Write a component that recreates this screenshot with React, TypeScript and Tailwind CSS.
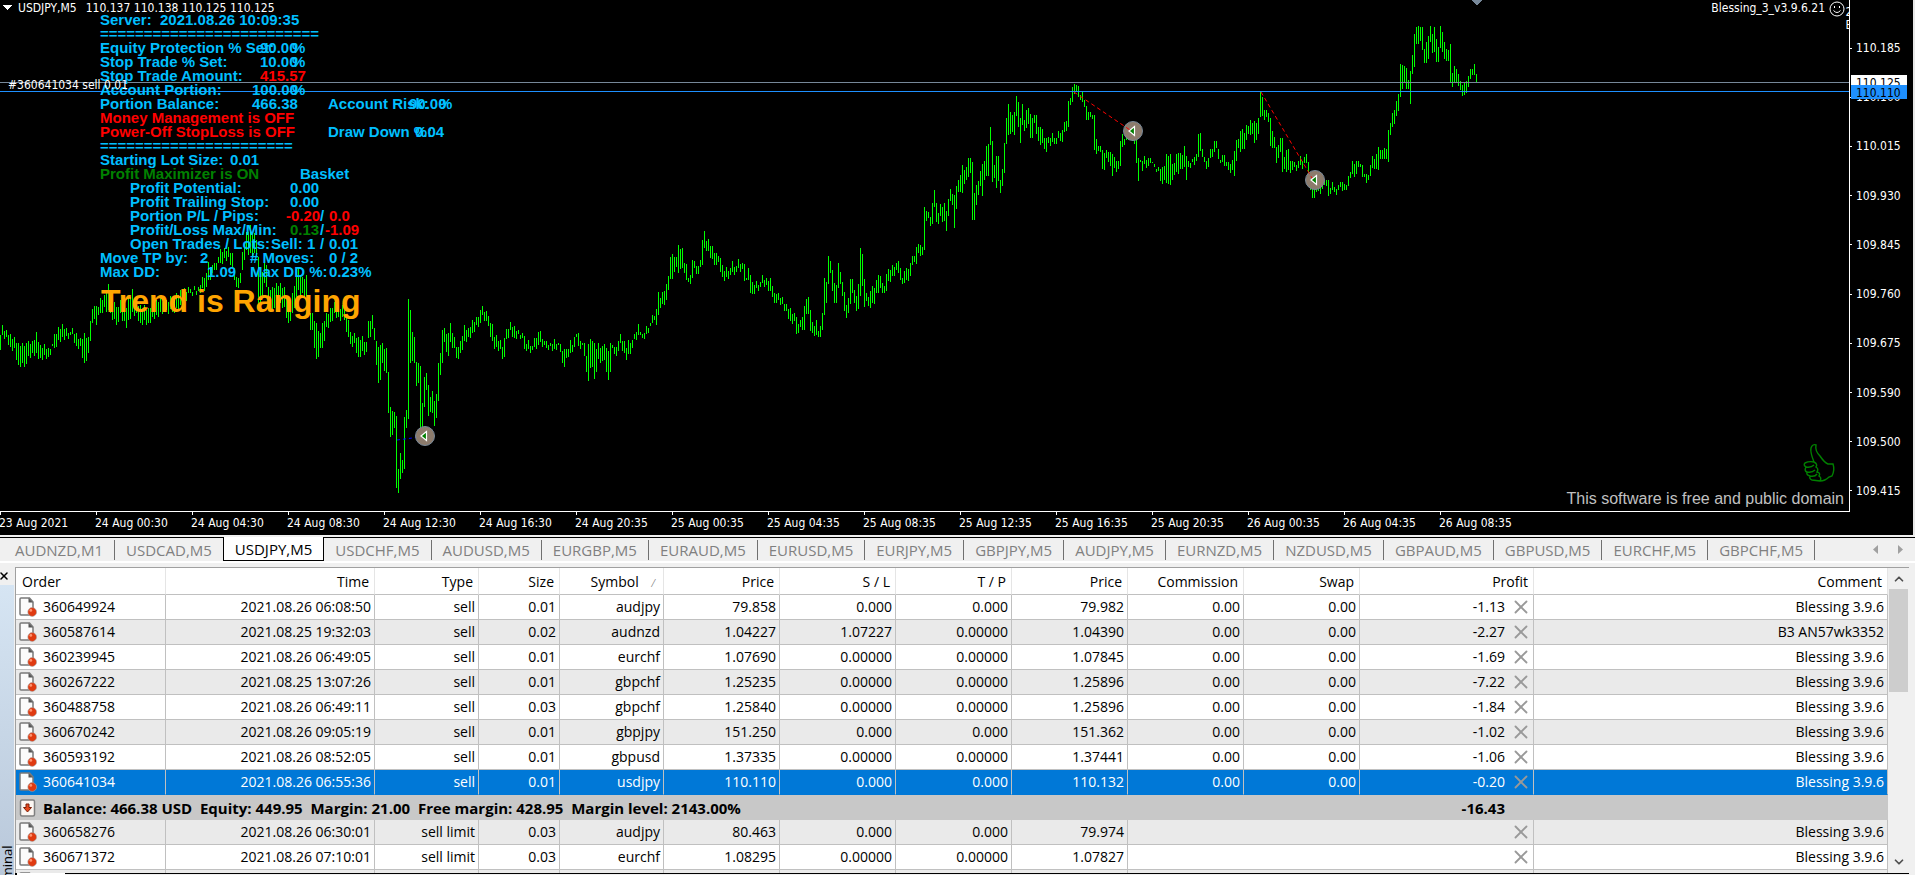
import { ChevronDown, ChevronUp, X } from 'lucide-react'

type Cell = { x: string; text: string; color?: string }

const RED = 'text-[#ff0000]'
const GREEN = 'text-[#008000]'

// x, high, low of each bar, one bar every two pixels; holes are interpolated
const BARS = [
  0, 335, 350, 2, 325, 335, 6, 330, 337, 10, 334, 347, 14, 337, 348, 18, 343, 365, 22, 343, 363, 26, 343, 364,
  28, 341, 356, 32, 341, 353, 36, 332, 353, 40, 345, 358, 44, 344, 355, 48, 348, 357, 52, 344, 346, 54, 334, 348,
  58, 327, 340, 62, 324, 337, 66, 328, 336, 70, 332, 335, 72, 328, 334, 76, 333, 346, 80, 338, 346, 84, 333, 363,
  88, 337, 353, 90, 321, 341, 92, 309, 323, 94, 306, 319, 96, 306, 325, 98, 307, 315, 100, 298, 313, 104, 295, 307,
  108, 284, 310, 110, 297, 313, 116, 307, 325, 120, 300, 313, 126, 308, 328, 128, 298, 320, 132, 289, 312, 136, 300, 313,
  140, 305, 323, 144, 305, 320, 148, 308, 323, 152, 302, 317, 156, 300, 315, 160, 298, 312, 166, 300, 310, 172, 297, 312,
  176, 293, 308, 180, 290, 305, 190, 289, 293, 198, 287, 291, 202, 277, 288, 206, 273, 287, 208, 262, 280, 212, 265, 273,
  214, 263, 270, 218, 257, 263, 220, 249, 263, 224, 248, 258, 228, 247, 257, 232, 253, 267, 236, 277, 287, 240, 273, 283,
  242, 252, 270, 244, 245, 260, 246, 232, 250, 250, 225, 253, 254, 233, 253, 256, 240, 257, 258, 257, 310, 260, 277, 303,
  264, 260, 283, 266, 265, 287, 268, 287, 307, 272, 287, 310, 276, 283, 300, 280, 283, 303, 284, 287, 307, 288, 300, 323,
  292, 293, 313, 296, 273, 297, 298, 267, 290, 302, 277, 293, 306, 275, 297, 308, 300, 313, 310, 313, 330, 312, 313, 330,
  316, 323, 359, 320, 333, 348, 322, 323, 348, 326, 313, 327, 330, 308, 322, 334, 302, 313, 338, 305, 317, 344, 308, 320,
  348, 320, 337, 350, 332, 344, 354, 333, 343, 358, 337, 357, 362, 336, 351, 366, 342, 352, 368, 321, 338, 372, 315, 329,
  374, 328, 340, 378, 347, 383, 380, 345, 380, 382, 343, 363, 386, 348, 373, 388, 372, 413, 390, 407, 437, 392, 411, 435,
  394, 412, 428, 396, 416, 488, 398, 469, 493, 400, 453, 479, 402, 460, 473, 404, 417, 469, 406, 410, 428, 408, 299, 419,
  410, 310, 363, 412, 332, 361, 414, 337, 363, 416, 362, 386, 418, 363, 383, 420, 366, 430, 422, 403, 435, 424, 377, 407,
  426, 373, 390, 428, 385, 416, 430, 397, 412, 432, 391, 413, 434, 401, 426, 436, 394, 418, 438, 363, 401, 440, 353, 375,
  442, 330, 363, 444, 328, 342, 448, 333, 356, 450, 323, 342, 454, 337, 348, 456, 347, 358, 460, 341, 353, 464, 325, 341,
  468, 328, 337, 472, 320, 333, 476, 317, 325, 480, 310, 323, 482, 306, 315, 486, 311, 321, 488, 316, 326, 492, 324, 341,
  494, 337, 349, 496, 335, 347, 500, 340, 349, 502, 347, 359, 504, 338, 357, 506, 329, 339, 510, 322, 330, 514, 326, 338,
  518, 330, 334, 522, 333, 338, 524, 336, 349, 526, 344, 351, 528, 340, 349, 532, 346, 350, 534, 338, 347, 538, 332, 345,
  540, 331, 342, 544, 341, 345, 546, 341, 348, 550, 343, 346, 554, 339, 349, 558, 343, 345, 560, 344, 352, 562, 351, 363,
  564, 349, 367, 566, 349, 358, 568, 349, 357, 570, 340, 353, 572, 345, 352, 574, 337, 347, 576, 334, 337, 578, 333, 346,
  582, 343, 345, 584, 343, 356, 586, 356, 372, 588, 344, 381, 590, 339, 368, 592, 341, 367, 594, 343, 379, 596, 349, 372,
  598, 343, 359, 602, 346, 361, 604, 344, 360, 606, 348, 372, 608, 351, 380, 610, 343, 372, 612, 345, 348, 614, 347, 354,
  618, 341, 351, 620, 334, 343, 624, 341, 353, 626, 348, 360, 628, 340, 354, 632, 340, 348, 634, 334, 339, 638, 324, 335,
  640, 332, 335, 642, 334, 338, 646, 326, 334, 650, 323, 326, 652, 315, 323, 654, 316, 320, 656, 309, 325, 658, 292, 315,
  660, 298, 308, 662, 292, 304, 666, 284, 300, 668, 276, 290, 670, 257, 279, 672, 254, 279, 674, 257, 272, 676, 257, 267,
  678, 245, 273, 680, 249, 269, 682, 248, 268, 684, 263, 273, 686, 264, 280, 688, 278, 282, 690, 275, 284, 692, 260, 278,
  694, 261, 268, 696, 266, 274, 700, 260, 267, 702, 240, 265, 704, 231, 248, 706, 241, 251, 708, 239, 251, 712, 246, 259,
  716, 253, 265, 718, 256, 262, 720, 258, 272, 722, 265, 277, 724, 271, 281, 726, 267, 277, 730, 268, 275, 732, 261, 272,
  736, 266, 272, 738, 259, 268, 742, 263, 269, 744, 264, 281, 746, 278, 280, 748, 268, 280, 750, 275, 293, 752, 282, 294,
  756, 281, 288, 760, 282, 287, 762, 275, 283, 766, 278, 285, 770, 278, 291, 772, 286, 297, 776, 294, 303, 778, 293, 300,
  782, 297, 304, 786, 304, 311, 790, 308, 321, 794, 313, 321, 796, 317, 334, 798, 324, 333, 800, 320, 327, 802, 317, 330,
  804, 306, 330, 806, 299, 314, 808, 297, 314, 810, 310, 331, 812, 322, 333, 814, 326, 336, 816, 320, 335, 818, 331, 337,
  820, 326, 337, 822, 313, 330, 824, 278, 315, 826, 282, 303, 828, 256, 284, 830, 261, 273, 832, 270, 291, 834, 283, 303,
  836, 285, 303, 838, 263, 288, 840, 272, 284, 842, 282, 296, 844, 292, 311, 846, 305, 318, 848, 298, 313, 850, 279, 304,
  852, 279, 293, 854, 290, 303, 856, 296, 311, 858, 284, 309, 860, 248, 296, 862, 254, 286, 864, 279, 307, 866, 293, 301,
  868, 297, 306, 870, 291, 308, 872, 286, 303, 874, 288, 304, 876, 280, 293, 878, 275, 293, 880, 276, 288, 882, 283, 293,
  884, 286, 293, 886, 274, 291, 888, 269, 281, 892, 265, 276, 896, 263, 270, 898, 261, 273, 900, 268, 280, 902, 278, 284,
  904, 271, 283, 906, 268, 280, 910, 263, 276, 912, 256, 265, 914, 256, 262, 916, 247, 264, 918, 244, 253, 920, 245, 256,
  922, 247, 255, 924, 207, 250, 926, 211, 221, 928, 212, 218, 930, 217, 226, 932, 203, 224, 934, 190, 207, 936, 203, 222,
  938, 213, 224, 940, 204, 216, 944, 203, 221, 946, 211, 231, 948, 199, 216, 950, 189, 201, 952, 194, 205, 954, 195, 228,
  956, 186, 209, 958, 180, 192, 960, 175, 192, 962, 165, 193, 964, 170, 184, 966, 167, 180, 968, 158, 177, 970, 158, 173,
  972, 162, 220, 974, 193, 220, 976, 185, 205, 978, 181, 195, 980, 171, 186, 982, 164, 196, 984, 161, 180, 986, 146, 176,
  988, 144, 176, 990, 127, 145, 992, 141, 182, 994, 165, 178, 996, 156, 188, 998, 156, 181, 1000, 180, 193, 1002, 169, 186,
  1004, 143, 173, 1006, 118, 144, 1008, 104, 135, 1010, 112, 134, 1012, 115, 132, 1014, 112, 135, 1016, 96, 116,
  1018, 102, 127, 1020, 118, 143, 1022, 104, 125, 1024, 120, 131, 1026, 110, 128, 1028, 108, 124, 1030, 114, 138,
  1032, 118, 138, 1034, 115, 123, 1036, 115, 134, 1038, 127, 141, 1040, 127, 145, 1042, 129, 143, 1044, 138, 149,
  1046, 138, 152, 1048, 137, 143, 1052, 133, 142, 1054, 138, 144, 1058, 131, 138, 1060, 133, 141, 1062, 130, 142,
  1064, 122, 132, 1066, 121, 131, 1068, 101, 127, 1070, 98, 105, 1072, 87, 102, 1074, 84, 94, 1076, 85, 92, 1078, 86, 97,
  1080, 95, 100, 1082, 92, 102, 1084, 100, 107, 1086, 106, 120, 1088, 112, 120, 1090, 112, 117, 1092, 115, 119,
  1094, 115, 150, 1096, 139, 154, 1098, 146, 151, 1100, 146, 152, 1102, 150, 169, 1104, 153, 170, 1106, 150, 158,
  1108, 152, 162, 1110, 152, 166, 1112, 154, 176, 1114, 157, 168, 1116, 161, 172, 1118, 161, 169, 1120, 141, 166,
  1122, 134, 147, 1124, 139, 145, 1126, 135, 140, 1128, 135, 140, 1130, 127, 138, 1132, 137, 141, 1134, 130, 144,
  1136, 133, 163, 1138, 158, 181, 1140, 160, 162, 1142, 161, 171, 1144, 156, 164, 1148, 158, 166, 1150, 158, 163,
  1152, 162, 163, 1154, 164, 167, 1158, 167, 171, 1160, 169, 181, 1162, 167, 184, 1164, 166, 180, 1166, 154, 183,
  1168, 156, 184, 1170, 154, 185, 1172, 164, 180, 1174, 163, 175, 1176, 154, 172, 1178, 153, 174, 1180, 153, 169,
  1182, 155, 169, 1184, 146, 167, 1186, 156, 180, 1188, 161, 167, 1192, 159, 162, 1194, 157, 165, 1196, 154, 161,
  1198, 134, 157, 1200, 133, 151, 1202, 149, 157, 1204, 157, 162, 1206, 161, 169, 1208, 158, 167, 1210, 149, 158,
  1212, 149, 157, 1214, 141, 152, 1216, 141, 148, 1218, 149, 159, 1220, 160, 163, 1222, 155, 162, 1224, 155, 166,
  1226, 162, 166, 1228, 162, 170, 1232, 160, 170, 1234, 151, 176, 1236, 140, 161, 1238, 139, 148, 1240, 131, 152,
  1242, 129, 149, 1244, 133, 149, 1246, 125, 140, 1248, 126, 134, 1250, 120, 135, 1252, 123, 134, 1254, 121, 143,
  1256, 123, 140, 1258, 118, 134, 1260, 92, 117, 1262, 97, 116, 1264, 110, 120, 1266, 110, 117, 1268, 113, 122,
  1270, 118, 146, 1272, 131, 148, 1274, 137, 148, 1276, 147, 163, 1278, 145, 158, 1280, 138, 152, 1282, 138, 172,
  1284, 157, 169, 1286, 150, 172, 1288, 149, 170, 1290, 161, 173, 1292, 161, 170, 1294, 162, 167, 1298, 161, 168,
  1300, 156, 165, 1302, 161, 169, 1304, 157, 163, 1306, 154, 163, 1308, 162, 184, 1310, 178, 190, 1312, 184, 198,
  1314, 185, 198, 1316, 185, 192, 1318, 186, 191, 1320, 186, 194, 1322, 179, 189, 1324, 181, 185, 1326, 180, 186,
  1328, 180, 196, 1330, 188, 194, 1332, 182, 190, 1334, 187, 192, 1336, 189, 195, 1338, 185, 190, 1340, 182, 187,
  1342, 182, 191, 1344, 184, 190, 1346, 185, 190, 1348, 176, 186, 1350, 172, 178, 1352, 161, 174, 1356, 161, 174,
  1358, 161, 167, 1360, 164, 167, 1362, 165, 177, 1364, 174, 177, 1366, 174, 183, 1368, 175, 180, 1370, 165, 176,
  1372, 156, 168, 1374, 159, 169, 1376, 154, 169, 1378, 147, 170, 1380, 150, 159, 1382, 150, 159, 1384, 148, 159,
  1386, 149, 159, 1388, 130, 162, 1390, 123, 135, 1392, 113, 127, 1394, 110, 124, 1396, 101, 116, 1398, 94, 111,
  1400, 64, 97, 1402, 65, 89, 1404, 66, 82, 1406, 68, 89, 1408, 80, 89, 1410, 71, 104, 1412, 55, 74, 1414, 34, 67,
  1416, 27, 44, 1418, 26, 44, 1420, 27, 41, 1422, 27, 50, 1424, 49, 63, 1426, 42, 63, 1428, 36, 59, 1430, 26, 42,
  1432, 34, 53, 1434, 27, 52, 1436, 39, 62, 1438, 47, 62, 1440, 26, 48, 1442, 32, 52, 1444, 42, 59, 1446, 49, 61,
  1448, 50, 61, 1450, 44, 83, 1452, 73, 87, 1454, 66, 82, 1456, 69, 83, 1458, 74, 86, 1460, 81, 90, 1462, 85, 96,
  1464, 82, 95, 1466, 81, 93, 1468, 76, 87, 1470, 69, 79, 1472, 69, 75, 1474, 64, 75, 1476, 74, 82,
]

function barsPath(b: number[]) {
  let d = ''
  for (let i = 0; i < b.length; i += 3) {
    const [x, hi, lo, nx, nhi, nlo] = b.slice(i, i + 6)
    const steps = nx === undefined ? 1 : (nx - x) / 2
    for (let s = 0; s < steps; s++) {
      const wobble = s === 0 ? 0 : s % 2 ? 3 : -2
      const h = s ? Math.round(hi + ((nhi - hi) * s) / steps) + wobble : hi
      const l = s ? Math.round(lo + ((nlo - lo) * s) / steps) + wobble : lo
      d += `M${x + s * 2} ${h}h1V${l}h-1z`
    }
  }
  return d
}

const panel: Cell[][] = [
  [{ x: 'left-0', text: 'Server:' }, { x: 'left-[60px]', text: '2021.08.26 10:09:35' }],
  [{ x: 'left-0', text: '=========================' }],
  [{ x: 'left-0', text: 'Equity Protection % Set:' }, { x: 'left-[160px]', text: '90.00' }, { x: 'left-[192px]', text: '%' }],
  [{ x: 'left-0', text: 'Stop Trade % Set:' }, { x: 'left-[160px]', text: '10.00' }, { x: 'left-[192px]', text: '%' }],
  [{ x: 'left-0', text: 'Stop Trade Amount:' }, { x: 'left-[160px]', text: '415.57', color: RED }],
  [{ x: 'left-0', text: 'Account Portion:' }, { x: 'left-[152px]', text: '100.00' }, { x: 'left-[192px]', text: '%' }],
  [
    { x: 'left-0', text: 'Portion Balance:' },
    { x: 'left-[152px]', text: '466.38' },
    { x: 'left-[228px]', text: 'Account Risk:' },
    { x: 'left-[309px]', text: '90.00' },
    { x: 'left-[339px]', text: '%' },
  ],
  [{ x: 'left-0', text: 'Money Management is OFF', color: RED }],
  [
    { x: 'left-0', text: 'Power-Off StopLoss is OFF', color: RED },
    { x: 'left-[228px]', text: 'Draw Down %:' },
    { x: 'left-[315px]', text: '0.04' },
  ],
  [{ x: 'left-0', text: '======================' }],
  [{ x: 'left-0', text: 'Starting Lot Size:' }, { x: 'left-[130px]', text: '0.01' }],
  [{ x: 'left-0', text: 'Profit Maximizer is ON', color: GREEN }, { x: 'left-[200px]', text: 'Basket' }],
  [{ x: 'left-[30px]', text: 'Profit Potential:' }, { x: 'left-[190px]', text: '0.00' }],
  [{ x: 'left-[30px]', text: 'Profit Trailing Stop:' }, { x: 'left-[190px]', text: '0.00' }],
  [
    { x: 'left-[30px]', text: 'Portion P/L / Pips:' },
    { x: 'left-[186px]', text: '-0.20', color: RED },
    { x: 'left-[220px]', text: '/' },
    { x: 'left-[229px]', text: '0.0', color: RED },
  ],
  [
    { x: 'left-[30px]', text: 'Profit/Loss Max/Min:' },
    { x: 'left-[190px]', text: '0.13', color: GREEN },
    { x: 'left-[220px]', text: '/' },
    { x: 'left-[225px]', text: '-1.09', color: RED },
  ],
  [
    { x: 'left-[30px]', text: 'Open Trades / Lots:' },
    { x: 'left-[171px]', text: 'Sell:' },
    { x: 'left-[207px]', text: '1' },
    { x: 'left-[220px]', text: '/' },
    { x: 'left-[229px]', text: '0.01' },
  ],
  [
    { x: 'left-0', text: 'Move TP by:' },
    { x: 'left-[100px]', text: '2' },
    { x: 'left-[150px]', text: '# Moves:' },
    { x: 'left-[229px]', text: '0 / 2' },
  ],
  [
    { x: 'left-0', text: 'Max DD:' },
    { x: 'left-[107px]', text: '1.09' },
    { x: 'left-[150px]', text: 'Max DD %:' },
    { x: 'left-[229px]', text: '0.23%' },
  ],
]

const prices = [
  '110.185', '110.100', '110.015', '109.930', '109.845',
  '109.760', '109.675', '109.590', '109.500', '109.415',
]

const times = [
  '23 Aug 2021', '24 Aug 00:30', '24 Aug 04:30', '24 Aug 08:30', '24 Aug 12:30', '24 Aug 16:30', '24 Aug 20:35',
  '25 Aug 00:35', '25 Aug 04:35', '25 Aug 08:35', '25 Aug 12:35', '25 Aug 16:35', '25 Aug 20:35', '26 Aug 00:35',
  '26 Aug 04:35', '26 Aug 08:35',
]

const tabs = [
  'AUDNZD,M1', 'USDCAD,M5', 'USDJPY,M5', 'USDCHF,M5', 'AUDUSD,M5', 'EURGBP,M5', 'EURAUD,M5', 'EURUSD,M5', 'EURJPY,M5',
  'GBPJPY,M5', 'AUDJPY,M5', 'EURNZD,M5', 'NZDUSD,M5', 'GBPAUD,M5', 'GBPUSD,M5', 'EURCHF,M5', 'GBPCHF,M5',
]
const activeTab = 'USDJPY,M5'

const columns = [
  { label: 'Order', width: 'w-[150px]' },
  { label: 'Time', width: 'w-[209px]' },
  { label: 'Type', width: 'w-[104px]' },
  { label: 'Size', width: 'w-[81px]' },
  { label: 'Symbol', width: 'w-[104px]' },
  { label: 'Price', width: 'w-[116px]' },
  { label: 'S / L', width: 'w-[116px]' },
  { label: 'T / P', width: 'w-[116px]' },
  { label: 'Price', width: 'w-[116px]' },
  { label: 'Commission', width: 'w-[116px]' },
  { label: 'Swap', width: 'w-[116px]' },
  { label: 'Profit', width: 'w-[174px]' },
  { label: 'Comment', width: '' },
]

// order, time, type, size, symbol, price, s/l, t/p, price, commission, swap, profit, comment
const trades = [
  ['360649924', '2021.08.26 06:08:50', 'sell', '0.01', 'audjpy', '79.858', '0.000', '0.000', '79.982', '0.00', '0.00', '-1.13', 'Blessing 3.9.6'],
  ['360587614', '2021.08.25 19:32:03', 'sell', '0.02', 'audnzd', '1.04227', '1.07227', '0.00000', '1.04390', '0.00', '0.00', '-2.27', 'B3 AN57wk3352'],
  ['360239945', '2021.08.26 06:49:05', 'sell', '0.01', 'eurchf', '1.07690', '0.00000', '0.00000', '1.07845', '0.00', '0.00', '-1.69', 'Blessing 3.9.6'],
  ['360267222', '2021.08.25 13:07:26', 'sell', '0.01', 'gbpchf', '1.25235', '0.00000', '0.00000', '1.25896', '0.00', '0.00', '-7.22', 'Blessing 3.9.6'],
  ['360488758', '2021.08.26 06:49:11', 'sell', '0.03', 'gbpchf', '1.25840', '0.00000', '0.00000', '1.25896', '0.00', '0.00', '-1.84', 'Blessing 3.9.6'],
  ['360670242', '2021.08.26 09:05:19', 'sell', '0.01', 'gbpjpy', '151.250', '0.000', '0.000', '151.362', '0.00', '0.00', '-1.02', 'Blessing 3.9.6'],
  ['360593192', '2021.08.26 08:52:05', 'sell', '0.01', 'gbpusd', '1.37335', '0.00000', '0.00000', '1.37441', '0.00', '0.00', '-1.06', 'Blessing 3.9.6'],
  ['360641034', '2021.08.26 06:55:36', 'sell', '0.01', 'usdjpy', '110.110', '0.000', '0.000', '110.132', '0.00', '0.00', '-0.20', 'Blessing 3.9.6'],
]
const selectedOrder = '360641034'

const pending = [
  ['360658276', '2021.08.26 06:30:01', 'sell limit', '0.03', 'audjpy', '80.463', '0.000', '0.000', '79.974', 'Blessing 3.9.6'],
  ['360671372', '2021.08.26 07:10:01', 'sell limit', '0.03', 'eurchf', '1.08295', '0.00000', '0.00000', '1.07827', 'Blessing 3.9.6'],
  ['', '', '', '', '', '', '', '', '', ''],
]

function Marker({ x, y }: { x: number; y: number }) {
  return (
    <g transform={`translate(${x} ${y})`}>
      <circle r="9.5" fill="#8c7b6c" stroke="#778899" />
      <path d="M-4 0L1.5 -4.5V4.5z" fill="#008000" stroke="#fff" strokeWidth="1.2" />
    </g>
  )
}

function OrderIcon() {
  return (
    <svg width="18" height="20" viewBox="0 0 18 20" className="shrink-0">
      <path d="M2 1h8.500l3.500 4v13H2q-1 0-1-1V2q0-1 1-1z" fill="#fbfbfb" stroke="#7a7a7a" strokeWidth="1.500" />
      <path d="M9.500 1v4.500H14z" fill="#555" />
      <circle cx="13.200" cy="15" r="4.400" fill="#e03a10" stroke="#a8a8a8" strokeWidth="0.600" />
      <circle cx="11.800" cy="13.400" r="1.400" fill="#ff9470" />
    </svg>
  )
}

function BalanceIcon() {
  return (
    <svg width="18" height="20" viewBox="0 0 18 20" className="shrink-0">
      <rect x="1.500" y="2" width="14" height="16" rx="1.500" fill="#fbf6f2" stroke="#808080" strokeWidth="1.500" />
      <path d="M7 6h3v3.500h2.500L8.500 14 4.500 9.500H7z" fill="#e8491d" stroke="#7d1f08" />
    </svg>
  )
}

function Chart() {
  return (
    <section className="bg-black font-['DejaVu_Sans_Condensed','DejaVu_Sans',sans-serif] text-xs text-white">
      <div className="flex h-[512px]">
        <div className="relative min-w-0 flex-1 overflow-hidden border-b border-r border-white">
          <svg className="absolute inset-0 h-full w-full" shapeRendering="crispEdges">
            <path d={barsPath(BARS)} fill="#00ff00" />
            <rect y="82" width="100%" height="1" fill="#778899" />
            <rect y="91" width="100%" height="1" fill="#1e90ff" />
            <path d="M1471 0h12l-6 5z" fill="#778899" />
            <path d="M3 5h9l-4.500 5z" fill="#fff" />
          </svg>
          <svg className="absolute inset-0 h-full w-full">
            <path d="M397 440L420 437" stroke="#0000ff" strokeDasharray="3 3" />
            <Marker x={425} y={436} />
            <Marker x={1133} y={131} />
            <Marker x={1315} y={180} />
            <path d="M1074 92L1130 130M1261 92L1312 178" stroke="#ff0000" strokeDasharray="4 3" fill="none" />
            {/* thumbs up, the expert advisor is allowed to trade */}
            <path
              transform="translate(1803 444)"
              d="M11 18C9 13 7 8 8 4C9 1 11 0 13 1C12 6 14 9 17 12C19 15 22 19 25 20L30 20Q32 26 29 32L26 33Q22 37 17 37L9 36Q6 35 7 32Q3 31 4 28Q1 27 3 23Q0 21 2 19Q6 17 11 18ZM3 23Q8 24 11 21M4 28Q9 29 12 26M7 32Q12 33 14 30M11 18Q15 20 13 23Q16 25 14 28Q18 29 16 32Q19 34 17 37"
              fill="none"
              stroke="#008000"
              strokeWidth="1.400"
            />
            <g transform="translate(1837 9)" fill="none" stroke="#fff">
              <circle r="7" />
              <path d="M-3.500 1.500Q0 5.500 3.500 1.500" />
              <path d="M-2.500 -3v2M2.500 -3v2" />
            </g>
          </svg>

          <h1 className="absolute left-[18px] top-0 flex gap-[9px] leading-4">
            <span>USDJPY,M5</span>
            <span>110.137 110.138 110.125 110.125</span>
          </h1>
          <div className="absolute right-6 top-0 leading-[17px]">Blessing_3_v3.9.6.21</div>
          <div className="absolute -right-1 top-[6px] leading-[13px]">
            2<br />B
          </div>

          <div className="absolute left-[100px] top-[13px] w-96 font-['Liberation_Sans',Arial,sans-serif] text-[15px] font-bold leading-[14px] text-[#00bfff]">
            {panel.map((row, i) => (
              <div key={i} className="relative h-[14px]">
                {row.map((c) => (
                  <span key={c.x} className={`absolute top-0 whitespace-pre ${c.x} ${c.color ?? ''}`}>
                    {c.text}
                  </span>
                ))}
              </div>
            ))}
            <p className="mt-[2px] whitespace-nowrap pl-px text-[32px] leading-10 text-[#ffa500]">Trend is Ranging</p>
          </div>
          <div className="absolute left-2 top-[77px] leading-4">#360641034 sell 0.01</div>
          <div className="absolute bottom-[3px] right-[5px] font-['Liberation_Sans',Arial,sans-serif] text-base leading-[18px] text-[#c0c0c0]">
            This software is free and public domain
          </div>
        </div>

        {/* price scale */}
        <div className="relative flex w-[65px] shrink-0 flex-col justify-between border-r-2 border-[#e8e8e8] pb-[13px] pt-10">
          {prices.map((p) => (
            <div key={p} className="flex h-4 items-center gap-1 leading-4">
              <i className="h-px w-[2px] bg-white" />
              {p}
            </div>
          ))}
          <div className="absolute left-[1px] top-[75px] h-[17px] w-14 bg-white pl-[5px] leading-4 text-black">110.125</div>
          <div className="absolute left-[1px] top-[85px] h-[14px] w-14 bg-[#1e90ff] pl-[5px] leading-4 text-black">110.110</div>
        </div>
      </div>

      {/* time scale */}
      <div className="flex h-[23px] overflow-hidden border-r-2 border-[#e8e8e8]">
        {times.map((t) => (
          <div key={t} className="w-24 shrink-0 whitespace-nowrap leading-4">
            <i className="block h-[3px] w-px bg-white" />
            <span className="-ml-px">{t}</span>
          </div>
        ))}
      </div>
    </section>
  )
}

function CloseCross() {
  return (
    <button aria-label="Close order" className="-mr-[2px] block text-[#999]">
      <X size={22} strokeWidth={2} />
    </button>
  )
}

export default function App() {
  return (
    <div className="flex h-screen flex-col overflow-hidden bg-[#f0f0f0] font-['Open_Sans','Noto_Sans',sans-serif] text-sm text-black">
      <Chart />

      <nav className="mt-[2px] flex h-[26px] shrink-0 items-start border-b-2 border-white border-t-black pl-1 text-[15px] [border-top-width:1px]">
        {tabs.map((t, i) => {
          const active = t === activeTab
          const divider = !active && tabs[i + 1] !== activeTab
          return (
            <button
              key={t}
              className={
                active
                  ? '-mt-px h-6 border-x border-b border-black bg-white px-[11px] leading-6'
                  : 'flex h-6 items-center text-[#808080]'
              }
            >
              {active ? t : <span className={`px-[11px] leading-5 ${divider ? 'border-r border-[#707070]' : ''}`}>{t}</span>}
            </button>
          )
        })}
        <div className="ml-auto flex h-full items-center gap-5 pr-3">
          <button aria-label="Scroll tabs left">
            <svg width="5" height="9"><path d="M5 0v9L0 4.500z" fill="#a0a0a0" /></svg>
          </button>
          <button aria-label="Scroll tabs right">
            <svg width="5" height="9"><path d="M0 0v9l5-4.500z" fill="#a0a0a0" /></svg>
          </button>
        </div>
      </nav>

      <main className="flex min-h-0 flex-1 pt-1">
        <aside className="flex w-[15px] shrink-0 flex-col">
          <button aria-label="Close terminal" className="h-[18px] shrink-0 overflow-hidden">
            <X size={12} strokeWidth={3} className="-ml-[2px]" />
          </button>
          <div className="mr-[1px] min-h-0 flex-1 overflow-hidden bg-gradient-to-b from-[#d6e5f3] to-[#b9c8da]">
            <div className="flex h-full rotate-180 items-start [writing-mode:vertical-rl]">
              <span className="-mt-6 text-[13px] leading-[14px]">Terminal</span>
            </div>
          </div>
        </aside>

        <div className="flex min-w-0 flex-1 flex-col pr-[6px]">
          <div className="flex min-h-0 flex-1 border-l border-t border-[#a0a0a0] bg-white">
            <div className="min-w-0 flex-1 overflow-hidden">
              <table className="w-full table-fixed border-separate border-spacing-0 whitespace-nowrap text-right leading-5">
                <thead>
                  <tr className="h-[27px]">
                    {columns.map((c, i) => (
                      <th
                        key={i}
                        className={`border-b border-r border-b-[#c0c0c0] border-r-[#e5e5e5] p-0 pr-[5px] pt-[2px] font-normal ${c.width} ${
                          i === 0 ? 'pl-[6px] text-left' : ''
                        }`}
                      >
                        {c.label}
                        {c.label === 'Symbol' && <span className="mx-1 pl-[10px] text-[10px] text-[#808080]">⁄</span>}
                      </th>
                    ))}
                  </tr>
                </thead>
                <tbody className="[&_td]:p-0 [&_td]:pr-[3px]">
                  {trades.map((row, r) => {
                    const selected = row[0] === selectedOrder
                    return (
                      <tr
                        key={row[0]}
                        className={`h-[25px] [&>td]:border-r [&>td]:border-r-[#c0c0c0] [&>td]:border-b ${
                          selected
                            ? 'bg-[#0078d7] text-white [&>td]:border-b-[#0078d7]'
                            : `[&>td]:border-b-[#c0c0c0] ${r % 2 ? 'bg-[#eaeaea]' : 'bg-white'}`
                        }`}
                      >
                        {row.map((v, i) => (
                          <td key={i}>
                            {i === 0 ? (
                              <div className="flex items-center gap-[6px] pl-[3px]">
                                <OrderIcon />
                                {v}
                              </div>
                            ) : i === 11 ? (
                              <div className="flex items-center justify-end gap-[5px]">
                                {v}
                                <CloseCross />
                              </div>
                            ) : (
                              v
                            )}
                          </td>
                        ))}
                      </tr>
                    )
                  })}
                  <tr className="h-[25px] bg-[#c8c8c8] text-[15px] font-bold">
                    <td colSpan={11}>
                      <div className="flex items-center gap-[6px] pl-[3px]">
                        <BalanceIcon />
                        <span className="whitespace-pre">
                          {'Balance: 466.38 USD  Equity: 449.95  Margin: 21.00  Free margin: 428.95  Margin level: 2143.00%'}
                        </span>
                      </div>
                    </td>
                    <td>
                      <div className="pr-[26px]">-16.43</div>
                    </td>
                    <td />
                  </tr>
                  {pending.map((row, r) => (
                    <tr
                      key={row[0]}
                      className={`h-[25px] [&>td]:border-b [&>td]:border-r [&>td]:border-[#c0c0c0] ${
                        r % 2 ? 'bg-white' : 'bg-[#eaeaea]'
                      }`}
                    >
                      {row.slice(0, 9).map((v, i) => (
                        <td key={i}>
                          {i === 0 ? (
                            <div className="flex items-center gap-[6px] pl-[3px]">
                              <OrderIcon />
                              {v}
                            </div>
                          ) : (
                            v
                          )}
                        </td>
                      ))}
                      <td colSpan={3}>
                        <div className="flex justify-end">
                          <CloseCross />
                        </div>
                      </td>
                      <td>{row[9]}</td>
                    </tr>
                  ))}
                </tbody>
              </table>
            </div>

            <div className="flex w-[21px] shrink-0 flex-col items-center bg-[#f0f0f0]">
              <button aria-label="Scroll up" className="flex h-[21px] items-center text-[#505050]">
                <ChevronUp size={14} strokeWidth={3} />
              </button>
              <div className="h-[103px] w-[19px] bg-[#cdcdcd]" />
              <button aria-label="Scroll down" className="mb-1 mt-auto text-[#505050]">
                <ChevronDown size={14} strokeWidth={3} />
              </button>
            </div>
          </div>
          <div className="flex h-[2px] shrink-0">
            <div className="w-[50px] border-l-2 border-black bg-white" />
            <div className="flex-1 border-t border-black" />
          </div>
        </div>
      </main>
    </div>
  )
}
